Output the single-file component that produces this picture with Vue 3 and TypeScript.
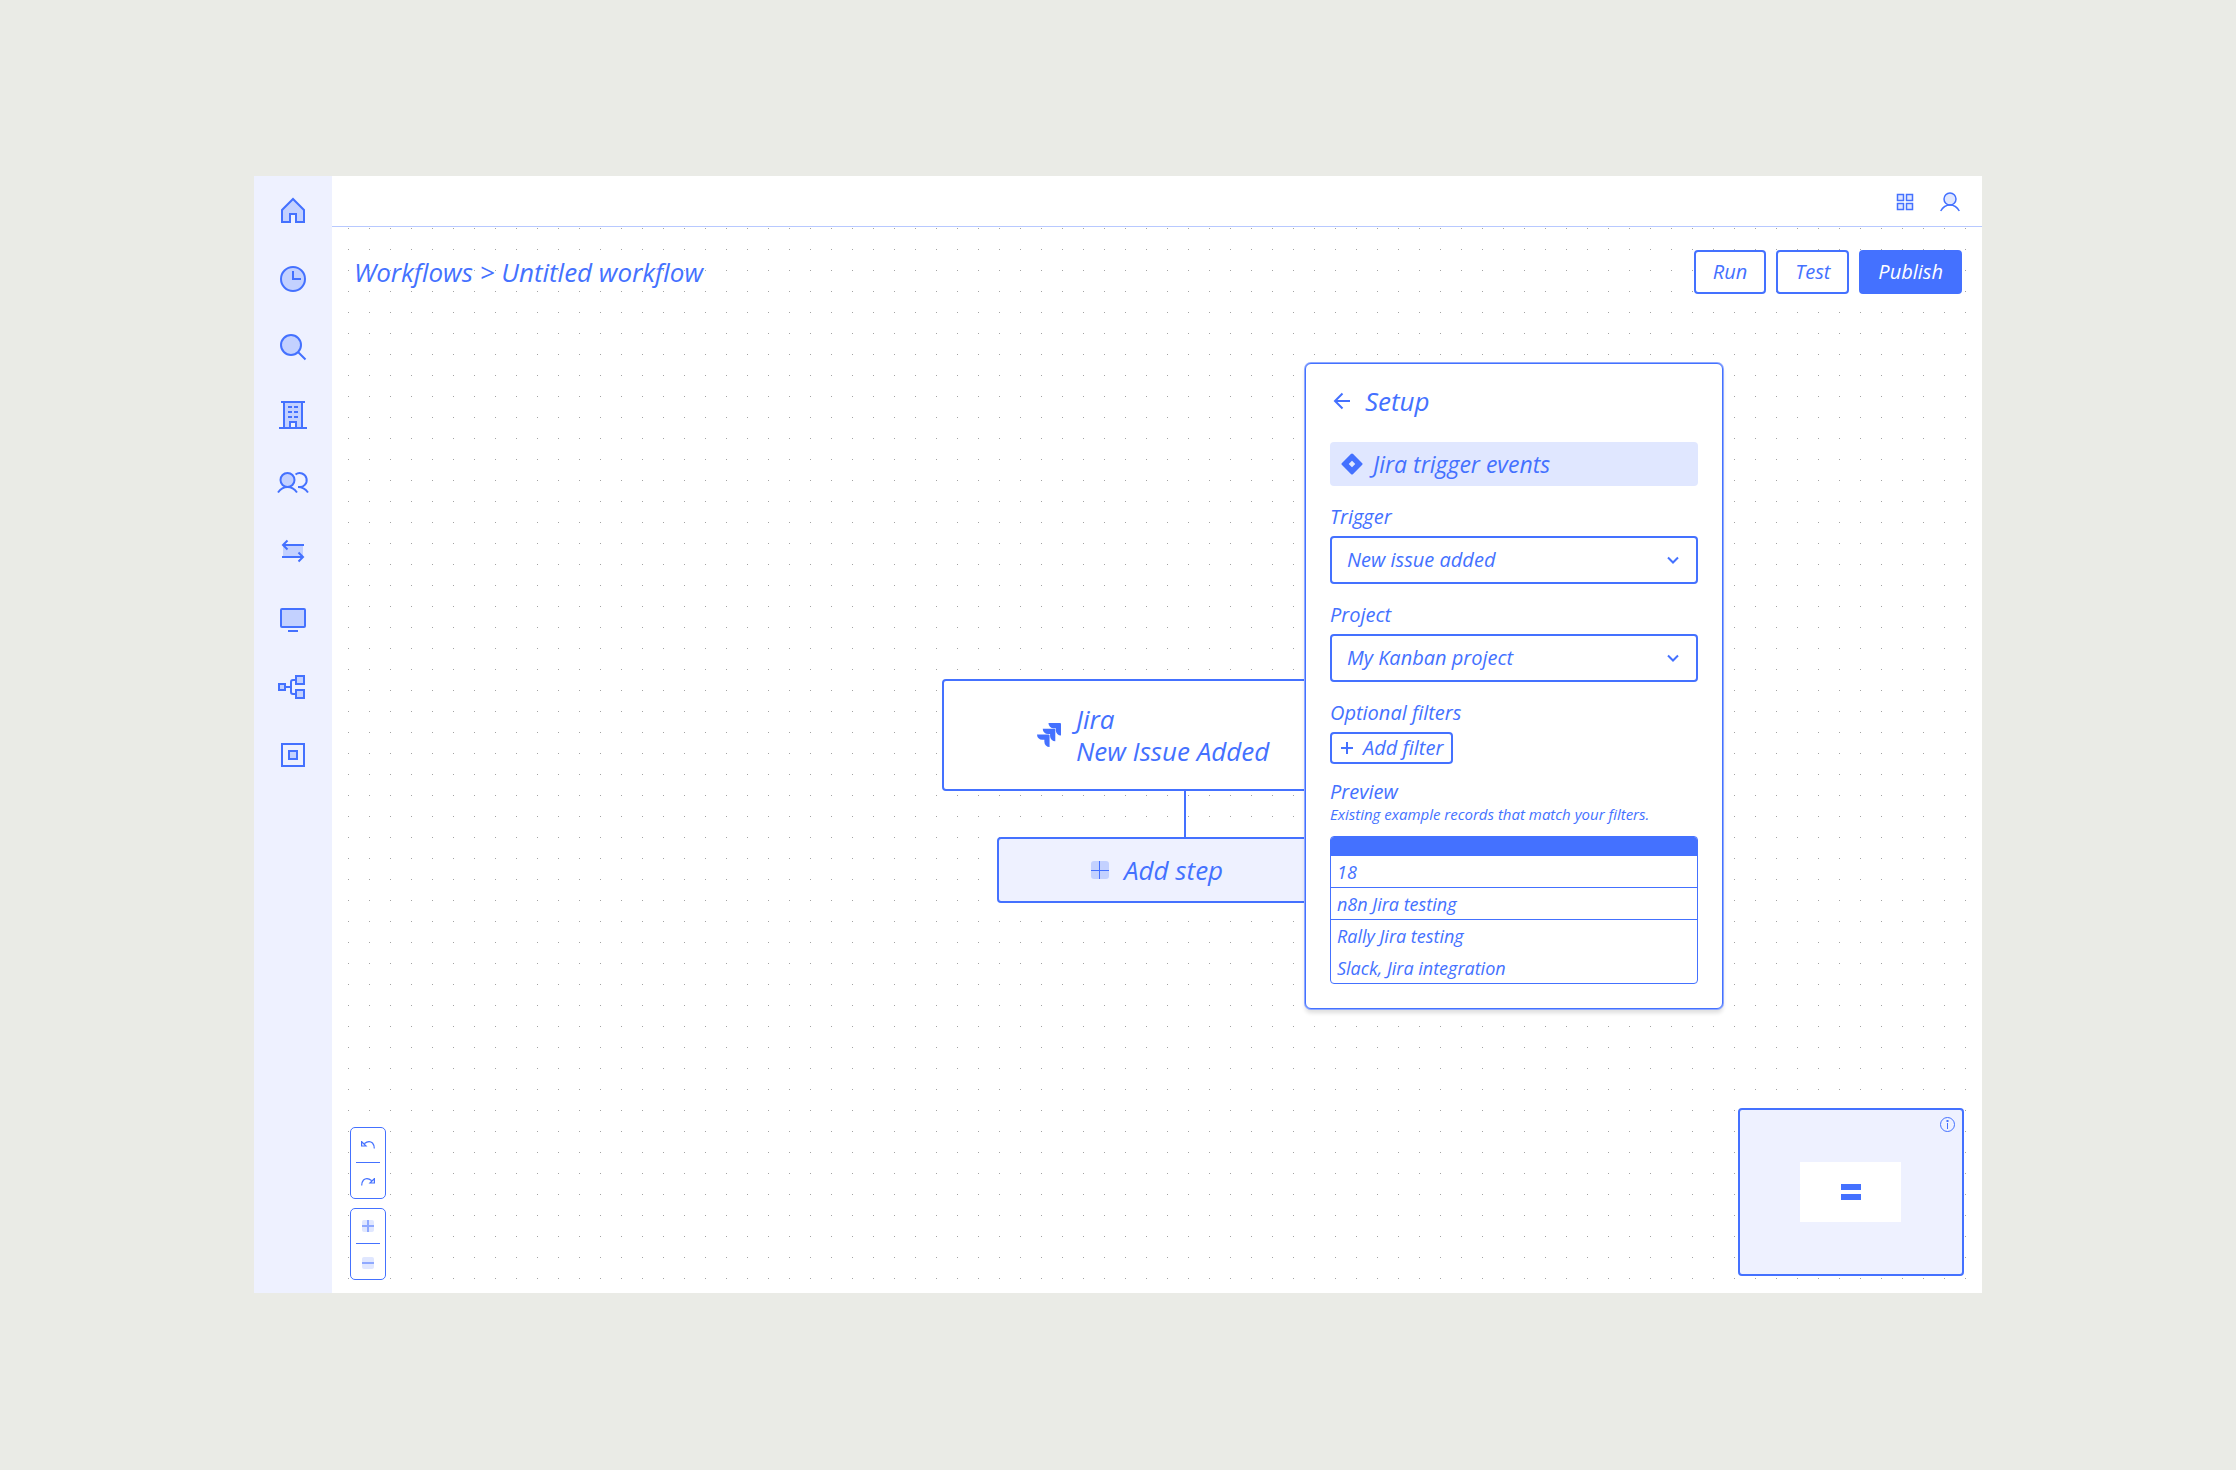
<script setup lang="ts">
import { ref } from 'vue'

interface NavItem {
  label: string
  fill: string
  line: string
  solid?: string
}

const navItems: NavItem[] = [
  {
    label: 'Home',
    fill: 'M-11-1 0-12 11-1V11H3V3H-3V11H-11Z',
    line: 'M-11-1 0-12 11-1V11H3V3H-3V11H-11Z',
  },
  {
    label: 'Recent',
    fill: 'M-12 0a12 12 0 1 0 24 0a12 12 0 1 0-24 0Z',
    line: 'M-12 0a12 12 0 1 0 24 0a12 12 0 1 0-24 0ZM0-8V0H8',
  },
  {
    label: 'Search',
    fill: 'M-12-2a10 10 0 1 0 20 0a10 10 0 1 0-20 0Z',
    line: 'M-12-2a10 10 0 1 0 20 0a10 10 0 1 0-20 0ZM5.500 5.500 12.500 12.500',
  },
  {
    label: 'Company',
    fill: 'M-9-13H9V13H3V7H-3V13H-9Z',
    line: 'M-12-13H12M-14 13H14M-9-13V13M9-13V13M-3 13V7H3V13',
    solid: 'M-5-9h4v2h-4ZM1-9h4v2h-4ZM-5-4h4v2h-4ZM1-4h4v2h-4ZM-5 1h4v2h-4ZM1 1h4v2h-4Z',
  },
  {
    label: 'People',
    fill: 'M-12.500-3a7 7 0 1 0 14 0a7 7 0 1 0-14 0Z',
    line: 'M-12.500-3a7 7 0 1 0 14 0a7 7 0 1 0-14 0ZM-15 9.500Q-11 4-5.500 4Q0 4 4 9.500M2.500-8.500A7 7 0 1 1 5.500 4M5 4Q11 4 15 9.500',
  },
  {
    label: 'Transfers',
    fill: 'M-10-6H10V6H-10Z',
    line: 'M-10-6H11M-5.500-10.500-10-6-5.500-1.500M-11 6H10M5.500 1.500 10 6 5.500 10.500',
  },
  {
    label: 'Devices',
    fill: 'M-12-10H12V8H-12Z',
    line: 'M-11-10H11a1 1 0 0 1 1 1V7a1 1 0 0 1-1 1H-11a1 1 0 0 1-1-1V-9a1 1 0 0 1 1-1ZM-5 12H5',
  },
  {
    label: 'Workflows',
    fill: 'M-14-3h6v6h-6ZM3-11h8v8h-8ZM3 3h8v8h-8Z',
    line: 'M-14-3h6v6h-6ZM3-11h8v8h-8ZM3 3h8v8h-8ZM-8 0H-2M3-7H0a2 2 0 0 0-2 2V5a2 2 0 0 0 2 2H3',
  },
  {
    label: 'Components',
    fill: 'M-4-4h8v8h-8Z',
    line: 'M-11-11h22v22h-22ZM-4-4h8v8h-8Z',
  },
]

const triggers = ['New issue added']
const projects = ['My Kanban project']
const trigger = ref(triggers[0])
const project = ref(projects[0])

const records = ['18', 'n8n Jira testing', 'Rally Jira testing', 'Slack, Jira integration']
</script>

<template>
  <div class="page">
    <div class="app">
      <nav class="sidebar" aria-label="Main">
        <a v-for="item in navItems" :key="item.label" href="#" class="nav-link" :aria-label="item.label">
          <svg width="32" height="32" viewBox="-16 -16 32 32">
            <path class="tint" :d="item.fill" />
            <path class="stroke" :d="item.line" />
            <path v-if="item.solid" class="solid" :d="item.solid" />
          </svg>
        </a>
      </nav>

      <div class="main">
        <header class="topbar">
          <button type="button" class="icon-button" aria-label="Apps">
            <svg width="20" height="20" viewBox="0 0 20 20">
              <path class="pale thin" d="M2.500 2.500h6v6h-6ZM11.500 2.500h6v6h-6ZM2.500 11.500h6v6h-6ZM11.500 11.500h6v6h-6Z" />
            </svg>
          </button>
          <button type="button" class="icon-button" aria-label="Account">
            <svg width="20" height="20" viewBox="0 0 20 20">
              <circle class="pale thin" cx="10" cy="7" r="6" />
              <path class="thin" d="M.700 19Q4 13 10 13T19.300 19" />
            </svg>
          </button>
        </header>

        <main class="canvas">
          <div class="toolbar">
            <h1 class="title">Workflows &gt; Untitled workflow</h1>
            <div class="actions">
              <button type="button" class="button">Run</button>
              <button type="button" class="button">Test</button>
              <button type="button" class="button primary">Publish</button>
            </div>
          </div>

          <div class="flow">
            <button type="button" class="node">
              <svg class="solid" width="24" height="24" viewBox="0 0 24 24">
                <path d="M11.571 11.513H0a5.218 5.218 0 0 0 5.232 5.215h2.130v2.057A5.215 5.215 0 0 0 12.575 24V12.518a1.005 1.005 0 0 0-1.005-1.005zM17.294 5.757H5.736a5.215 5.215 0 0 0 5.215 5.214h2.129v2.058a5.218 5.218 0 0 0 5.215 5.214V6.758a1.001 1.001 0 0 0-1.001-1.001zM23.013 0H11.455a5.215 5.215 0 0 0 5.215 5.215h2.129v2.057A5.215 5.215 0 0 0 24 12.483V1.005A1.001 1.001 0 0 0 23.013 0Z" />
              </svg>
              <span>Jira<br />New Issue Added</span>
            </button>
            <div class="connector"></div>
            <button type="button" class="node step">
              <svg width="18" height="18" viewBox="0 0 18 18">
                <rect class="tint" width="18" height="18" rx="3" />
                <path class="hair" d="M8.500 0V18M0 9.500H18" />
              </svg>
              <span>Add step</span>
            </button>
          </div>

          <section class="panel">
            <div class="panel-head">
              <button type="button" class="icon-button" aria-label="Back">
                <svg width="24" height="24" viewBox="0 0 24 24">
                  <path class="stroke" d="M20 12H5M12.500 4.500 5 12l7.500 7.500" />
                </svg>
              </button>
              <h2>Setup</h2>
            </div>

            <div class="banner">
              <svg class="solid" width="22" height="22" viewBox="0 0 22 22">
                <path fill-rule="evenodd" d="M9.900 1a1.500 1.500 0 0 1 2.200 0L21 9.900a1.500 1.500 0 0 1 0 2.200L12.100 21a1.500 1.500 0 0 1-2.200 0L1 12.100a1.500 1.500 0 0 1 0-2.200ZM11 7.700 7.700 11 11 14.300 14.300 11Z" />
              </svg>
              <span>Jira trigger events</span>
            </div>

            <div class="field">
              <label for="trigger">Trigger</label>
              <div class="select">
                <select id="trigger" v-model="trigger">
                  <option v-for="name in triggers" :key="name">{{ name }}</option>
                </select>
                <svg width="12" height="8" viewBox="0 0 12 8"><path class="stroke" d="M1 1.500 6 6.500 11 1.500" /></svg>
              </div>
            </div>

            <div class="field">
              <label for="project">Project</label>
              <div class="select">
                <select id="project" v-model="project">
                  <option v-for="name in projects" :key="name">{{ name }}</option>
                </select>
                <svg width="12" height="8" viewBox="0 0 12 8"><path class="stroke" d="M1 1.500 6 6.500 11 1.500" /></svg>
              </div>
            </div>

            <div class="field">
              <h3>Optional filters</h3>
              <button type="button" class="add-filter">
                <svg width="12" height="12" viewBox="0 0 12 12"><path class="stroke" d="M6 0V12M0 6H12" /></svg>
                <span>Add filter</span>
              </button>
            </div>

            <div class="preview">
              <h3>Preview</h3>
              <p>Existing example records that match your filters.</p>
              <table aria-label="Preview">
                <thead>
                  <tr><td></td></tr>
                </thead>
                <tbody>
                  <tr v-for="record in records" :key="record">
                    <td>{{ record }}</td>
                  </tr>
                </tbody>
              </table>
            </div>
          </section>

          <div class="controls">
            <div class="control-group">
              <button type="button" class="icon-button" aria-label="Undo">
                <svg width="14" height="8" viewBox="0 0 14 8">
                  <path class="fine" d="M.600.600V5H5ZM3.500 2.500Q8-1 11.500 2Q13.300 4 13.300 7.500" />
                </svg>
              </button>
              <hr />
              <button type="button" class="icon-button" aria-label="Redo">
                <svg width="14" height="8" viewBox="0 0 14 8">
                  <path class="fine" d="M13.400.600V5H9ZM10.500 2.500Q6-1 2.500 2Q.700 4 .700 7.500" />
                </svg>
              </button>
            </div>
            <div class="control-group">
              <button type="button" class="icon-button" aria-label="Zoom in">
                <svg width="12" height="12" viewBox="0 0 12 12">
                  <rect class="wash" width="12" height="12" rx="2" />
                  <path class="soft" d="M6 0V12M0 6H12" />
                </svg>
              </button>
              <hr />
              <button type="button" class="icon-button" aria-label="Zoom out">
                <svg width="12" height="12" viewBox="0 0 12 12">
                  <rect class="wash" width="12" height="12" rx="2" />
                  <path class="soft" d="M0 6H12" />
                </svg>
              </button>
            </div>
          </div>

          <div class="minimap">
            <button type="button" class="icon-button info" aria-label="Info">
              <svg width="17" height="17" viewBox="0 0 17 17">
                <circle class="hair" cx="8.500" cy="8.500" r="7" />
                <path class="hair" d="M8.500 7V13" />
                <path class="solid" d="M7.500 4h2v2h-2Z" />
              </svg>
            </button>
            <div class="viewport">
              <i></i>
              <i></i>
            </div>
          </div>
        </main>
      </div>
    </div>
  </div>
</template>

<style>
body {
  margin: 0;
  background: #eaebe6;
}
</style>

<style scoped>
.page {
  --blue: #4471ff;
  --tint: #c3d1ff;
  --wash: #e0e7ff;
  --pale: #eef1ff;
  box-sizing: border-box;
  display: flex;
  min-height: 100vh;
  padding: 176px 254px 177px;
  color: var(--blue);
  font-family: "Open Sans", "Noto Sans", sans-serif;
  font-style: italic;
  font-size: 20px;
  line-height: 24px;
}

.page * {
  box-sizing: border-box;
}

h1,
h2,
h3,
p {
  margin: 0;
  font-weight: 400;
}

button,
select {
  color: inherit;
  font: inherit;
}

svg {
  display: block;
  flex: none;
  fill: none;
}

.tint {
  fill: var(--tint);
}

.wash {
  fill: var(--wash);
}

.solid {
  fill: var(--blue);
}

.stroke {
  stroke: var(--blue);
  stroke-width: 2;
}

.thin {
  stroke: var(--blue);
  stroke-width: 1.5;
}

.fine {
  stroke: var(--blue);
  stroke-width: 1.2;
}

.pale {
  fill: var(--wash);
}

.hair {
  stroke: var(--blue);
  stroke-width: 1;
}

.soft {
  stroke: #8fa9ff;
  stroke-width: 2;
}

.app {
  display: flex;
  flex: 1;
  background: #fff;
}

.sidebar {
  display: flex;
  flex-direction: column;
  align-items: center;
  gap: 36px;
  width: 78px;
  padding-top: 19px;
  background: var(--pale);
}

.nav-link {
  display: block;
}

.main {
  display: flex;
  flex: 1;
  flex-direction: column;
}

.topbar {
  display: flex;
  align-items: center;
  justify-content: flex-end;
  gap: 25px;
  height: 51px;
  padding: 2px 22px 0;
  border-bottom: 1px solid #b8c9ff;
}

.icon-button {
  display: flex;
  align-items: center;
  justify-content: center;
  padding: 0;
  border: 0;
  background: none;
}

.canvas {
  position: relative;
  flex: 1;
  background: conic-gradient(from 270deg at 1px 1px, #a3a3a3 90deg, transparent 0) 16px 1px / 21px 21px;
}

.toolbar {
  display: flex;
  align-items: center;
  justify-content: space-between;
  padding: 23px 20px 0 22px;
}

.title {
  font-size: 26px;
  line-height: 32px;
}

.actions {
  display: flex;
  gap: 10px;
}

.button {
  height: 44px;
  padding: 0 17px;
  border: 2px solid var(--blue);
  border-radius: 4px;
  background: #fff;
}

.primary {
  background: var(--blue);
  color: #fff;
}

.flow {
  position: absolute;
  top: 452px;
  left: calc(50% + 28px);
  display: flex;
  flex-direction: column;
  align-items: center;
  width: 486px;
  transform: translateX(-50%);
}

.node {
  display: flex;
  align-items: center;
  gap: 15px;
  width: 100%;
  height: 112px;
  padding: 0 93px;
  border: 2px solid var(--blue);
  border-radius: 4px;
  background: #fff;
  font-size: 26px;
  line-height: 32px;
  text-align: left;
}

.step {
  width: 376px;
  height: 66px;
  padding: 0 92px;
  background: var(--pale);
}

.connector {
  width: 2px;
  height: 46px;
  background: var(--blue);
}

.panel {
  position: absolute;
  top: 136px;
  right: 259px;
  display: flex;
  flex-direction: column;
  width: 418px;
  padding: 20px 24px 24px;
  border: 1px solid var(--blue);
  border-radius: 6px;
  background: #fff;
  box-shadow: 0 0 0 1px #8fa9ff, 0 4px 4px #0002;
}

.panel-head {
  display: flex;
  align-items: center;
  gap: 11px;
  height: 34px;
}

.panel-head h2 {
  font-size: 26px;
  line-height: 32px;
}

.banner {
  display: flex;
  align-items: center;
  gap: 10px;
  height: 44px;
  margin-top: 24px;
  padding: 0 11px;
  border-radius: 4px;
  background: var(--wash);
  font-size: 23px;
}

.field {
  display: flex;
  flex-direction: column;
  align-items: flex-start;
  gap: 7px;
  margin-top: 19px;
}

h3 {
  font-size: 20px;
}

.select {
  position: relative;
  width: 100%;
}

.select select {
  display: block;
  width: 100%;
  height: 48px;
  padding: 0 15px;
  border: 2px solid var(--blue);
  border-radius: 4px;
  background: #fff;
  appearance: none;
}

.select svg {
  position: absolute;
  top: 20px;
  right: 19px;
  pointer-events: none;
}

.add-filter {
  display: flex;
  align-items: center;
  gap: 10px;
  height: 32px;
  padding: 0 8px 0 9px;
  border: 2px solid var(--blue);
  border-radius: 4px;
  background: #fff;
}

.preview {
  margin-top: 16px;
}

.preview p {
  font-size: 15px;
  line-height: 20px;
}

table {
  width: 100%;
  margin-top: 12px;
  border: 1px solid var(--blue);
  border-radius: 4px;
  border-spacing: 0;
  overflow: hidden;
}

td {
  height: 32px;
  padding: 0 6px;
  font-size: 18px;
}

thead td {
  height: 19px;
  background: var(--blue);
}

tbody tr:nth-child(-n + 2) td {
  border-bottom: 1px solid var(--blue);
}

tbody tr:last-child td {
  height: 31px;
}

.controls {
  position: absolute;
  bottom: 13px;
  left: 18px;
  display: flex;
  flex-direction: column;
  gap: 9px;
}

.control-group {
  display: flex;
  flex-direction: column;
  align-items: center;
  width: 36px;
  border: 1px solid var(--blue);
  border-radius: 5px;
  background: #fff;
}

.control-group .icon-button {
  width: 100%;
  height: 34px;
}

.control-group hr + .icon-button {
  height: 35px;
  padding-top: 3px;
}

hr {
  width: 24px;
  height: 1px;
  margin: 0;
  border: 0;
  background: var(--blue);
}

.minimap {
  position: absolute;
  right: 18px;
  bottom: 17px;
  display: flex;
  align-items: center;
  justify-content: center;
  width: 226px;
  height: 168px;
  padding-right: 1px;
  border: 2px solid var(--blue);
  border-radius: 4px;
  background: var(--pale);
}

.info {
  position: absolute;
  top: 6px;
  right: 6px;
}

.viewport {
  display: flex;
  flex-direction: column;
  align-items: center;
  justify-content: center;
  gap: 4px;
  width: 101px;
  height: 60px;
  background: #fff;
}

.viewport i {
  width: 20px;
  height: 6px;
  background: var(--blue);
}
</style>
